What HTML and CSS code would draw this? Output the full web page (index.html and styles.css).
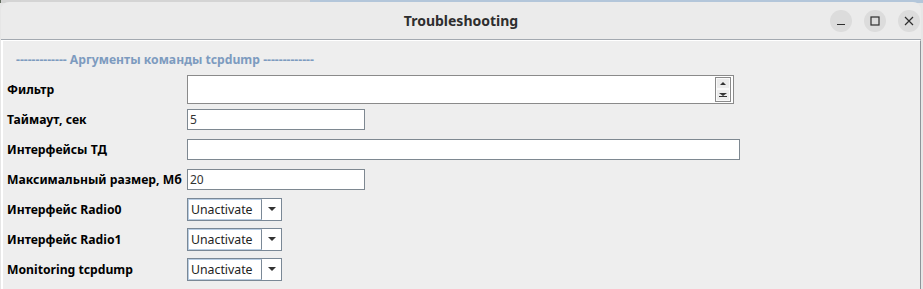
FILE: index.html
```html
<!DOCTYPE html>
<html lang="ru">
<head>
    <meta charset="UTF-8">
    <title>Troubleshooting</title>
    <link rel="stylesheet" href="styles.css">
</head>
<body>
    <div class="window">
        <div class="titlebar">
            <div></div>
            <div class="title">Troubleshooting</div>
            <div class="controls">
                <span class="ctl">
                    <svg width="10" height="10" viewBox="0 0 10 10"><path d="M1 8.5h8" stroke="#2e2e2e" stroke-width="1.2"/></svg>
                </span>
                <span class="ctl">
                    <svg width="10" height="10" viewBox="0 0 10 10"><rect x="1" y="1" width="8" height="8" fill="none" stroke="#2e2e2e" stroke-width="1.2"/></svg>
                </span>
                <span class="ctl">
                    <svg width="10" height="10" viewBox="0 0 10 10"><path d="M1 1l8 8M9 1l-8 8" stroke="#2e2e2e" stroke-width="1.2"/></svg>
                </span>
            </div>
        </div>

        <div class="panel">
            <div class="section-title">------------- Аргументы команды tcpdump -------------</div>

            <div class="form-row">
                <label class="field-label">Фильтр</label>
                <div class="text-box filter-box">
                    <div class="spinner">
                        <span class="spin-half"><i class="arrow-up"></i></span>
                        <span class="spin-half"><i class="arrow-down small"></i></span>
                    </div>
                </div>
            </div>

            <div class="form-row">
                <label class="field-label">Таймаут, сек</label>
                <div class="text-box short-box">5</div>
            </div>

            <div class="form-row">
                <label class="field-label">Интерфейсы ТД</label>
                <div class="text-box wide-box"></div>
            </div>

            <div class="form-row">
                <label class="field-label">Максимальный размер, Мб</label>
                <div class="text-box short-box">20</div>
            </div>

            <div class="form-row">
                <label class="field-label">Интерфейс Radio0</label>
                <div class="combo">
                    <span class="combo-value">Unactivate</span>
                    <span class="combo-button"><i class="arrow-down"></i></span>
                </div>
            </div>

            <div class="form-row">
                <label class="field-label">Интерфейс Radio1</label>
                <div class="combo">
                    <span class="combo-value">Unactivate</span>
                    <span class="combo-button"><i class="arrow-down"></i></span>
                </div>
            </div>

            <div class="form-row">
                <label class="field-label">Monitoring tcpdump</label>
                <div class="combo">
                    <span class="combo-value">Unactivate</span>
                    <span class="combo-button"><i class="arrow-down"></i></span>
                </div>
            </div>
        </div>
    </div>
</body>
</html>
```

FILE: styles.css
```css
body {
    margin: 0;
    width: 923px;
    height: 289px;
    overflow: hidden;
    font-family: "Noto Sans", sans-serif;
    background:
        linear-gradient(to right, #5f6a5c 0 1px, #d4d4d4 1px 310px, #b3c6da 310px) top / 100% 3px no-repeat,
        #e6e6e6;
}

.window {
    margin: 2px 0 0 1px;
    width: 920px;
    height: 287px;
    border-radius: 8px 8px 0 0;
    background-color: #ebebeb;
    overflow: hidden;
}

/* title bar */
.titlebar {
    height: 38px;
    display: grid;
    grid-template-columns: 1fr auto 1fr;
    align-items: center;
    border-bottom: 1px solid #a3a9b0;
    box-sizing: border-box;
}

.title {
    font-size: 14px;
    font-weight: bold;
    color: #2e2e2e;
}

.controls {
    display: flex;
    justify-content: flex-end;
    gap: 12px;
    padding-right: 1px;
}

.ctl {
    width: 22px;
    height: 22px;
    border-radius: 50%;
    background-color: #dcdcdc;
    display: flex;
    justify-content: center;
    align-items: center;
}

/* content */
.panel {
    height: 248px;
    background-color: #eeeeee;
    border-top: 1px solid #ffffff;
    border-left: 2px solid #ffffff;
    border-right: 1px solid #8e9499;
    padding-left: 4px;
}

.section-title {
    height: 33px;
    padding: 4px 0 0 9px;
    box-sizing: border-box;
    display: flex;
    align-items: center;
    font-size: 12.2px;
    font-weight: bold;
    color: #7d9bbf;
}

.form-row {
    height: 30px;
    display: flex;
    align-items: center;
}

.field-label {
    width: 180px;
    flex-shrink: 0;
    font-size: 12.2px;
    font-weight: bold;
    color: #000;
}

.text-box {
    height: 21px;
    box-sizing: border-box;
    border: 1px solid #7e8891;
    background-color: #fff;
    font-size: 12px;
    line-height: 19px;
    padding-left: 2px;
    color: #333;
}

.short-box {
    width: 178px;
}

.wide-box {
    width: 553px;
}

.filter-box {
    width: 547px;
    height: 29px;
    border-color: #8a8a8a;
    display: flex;
    justify-content: flex-end;
    align-items: center;
    padding-right: 2px;
}

.spinner {
    width: 16px;
    height: 25px;
    box-sizing: border-box;
    border: 1px solid #8a8a8a;
    display: flex;
    flex-direction: column;
}

.spin-half {
    flex: 1;
    display: flex;
    justify-content: center;
    align-items: center;
    background-color: #ececec;
    border: 1px solid #fafafa;
}

.arrow-up {
    width: 0;
    height: 0;
    border-left: 3px solid transparent;
    border-right: 3px solid transparent;
    border-bottom: 3px solid #333;
}

.arrow-down {
    width: 0;
    height: 0;
    border-left: 4px solid transparent;
    border-right: 4px solid transparent;
    border-top: 4px solid #333;
}

.arrow-down.small {
    border-left-width: 4px;
    border-right-width: 4px;
    border-top-width: 3px;
    box-shadow: 0 1px 0 0 #333;
}

/* combo boxes */
.combo {
    width: 95px;
    height: 23px;
    box-sizing: border-box;
    border: 1px solid #7a8896;
    display: flex;
    background-color: #fff;
}

.combo-value {
    width: 74px;
    box-sizing: border-box;
    border: 1px solid #b8cde3;
    border-right: 1px solid #7a8896;
    padding-left: 2px;
    font-size: 12.3px;
    line-height: 19px;
    color: #222;
}

.combo-button {
    flex: 1;
    display: flex;
    justify-content: center;
    align-items: center;
}
```
